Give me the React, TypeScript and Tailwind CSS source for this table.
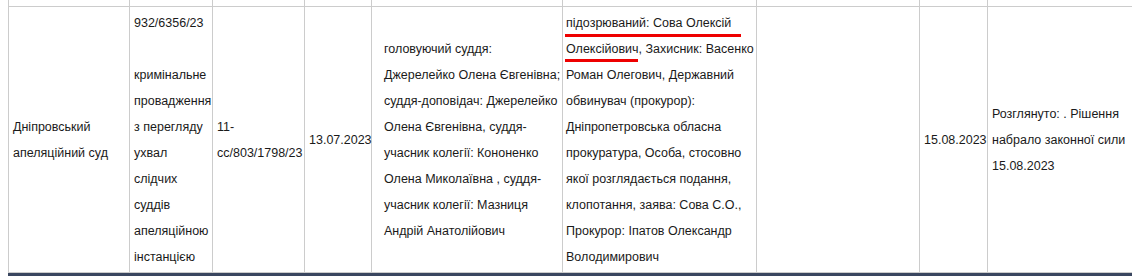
import React from "react";

const col2 = [
  "932/6356/23",
  "",
  "кримінальне",
  "провадження",
  "з перегляду",
  "ухвал",
  "слідчих",
  "суддів",
  "апеляційною",
  "інстанцією",
];

const col5 = [
  "головуючий суддя:",
  "Джерелейко Олена Євгенівна;",
  "суддя-доповідач: Джерелейко",
  "Олена Євгенівна, суддя-",
  "учасник колегії: Кононенко",
  "Олена Миколаївна , суддя-",
  "учасник колегії: Мазниця",
  "Андрій Анатолійович",
];

const col6 = [
  "підозрюваний: Сова Олексій",
  "Олексійович, Захисник: Васенко",
  "Роман Олегович, Державний",
  "обвинувач (прокурор):",
  "Дніпропетровська обласна",
  "прокуратура, Особа, стосовно",
  "якої розглядається подання,",
  "клопотання, заява: Сова С.О.,",
  "Прокурор: Іпатов Олександр",
  "Володимирович",
];

const widths = [121, 83, 92, 67, 191, 194, 163, 68, 150];

function Lines({ lines }: { lines: string[] }) {
  return (
    <>
      {lines.map((l, i) => (
        <div key={i} className="whitespace-nowrap h-[26px]">
          {l}
        </div>
      ))}
    </>
  );
}

export default function App() {
  const cell = "border-x border-[#cccccc] align-middle px-[4px] pt-[3px] pb-[2px]";
  return (
    <div className="w-[1132px] h-[276px] overflow-hidden bg-white">
      <table
        className="ml-[8px] border-collapse table-fixed text-[12.5px] leading-[26px] text-[#1a1a1a] font-['Liberation_Sans',Arial,sans-serif]"
        style={{ width: widths.reduce((a, b) => a + b, 0) }}
      >
        <colgroup>
          {widths.map((w, i) => (
            <col key={i} style={{ width: w }} />
          ))}
        </colgroup>
        <tbody>
          <tr>
            {widths.map((_, i) => (
              <td key={i} className="border-x border-[#cccccc] p-0 h-[6px]" />
            ))}
          </tr>
          <tr className="border-y border-[#cccccc]">
            <td className={cell}>
              <Lines lines={["Дніпровський", "апеляційний суд"]} />
            </td>
            <td className={cell}>
              <Lines lines={col2} />
            </td>
            <td className={cell}>
              <Lines lines={["11-", "cc/803/1798/23"]} />
            </td>
            <td className={cell}>13.07.2023</td>
            <td className={`${cell} pl-[12px]`}>
              <Lines lines={col5} />
            </td>
            <td className={`${cell} pl-[3px]`}>
              <div className="relative">
                <Lines lines={col6} />
                <div className="absolute left-[-1px] top-[24px] w-[176px] h-[3px] bg-[#ee0000]" />
                <div className="absolute left-[-1px] top-[49px] w-[73px] h-[3px] bg-[#ee0000]" />
              </div>
            </td>
            <td className={cell} />
            <td className={cell}>15.08.2023</td>
            <td className={cell}>
              <Lines
                lines={["Розглянуто: . Рішення", "набрало законної сили", "15.08.2023"]}
              />
            </td>
          </tr>
        </tbody>
      </table>
      <div className="ml-[8px] h-[3px] bg-[#3a4660]" />
    </div>
  );
}
